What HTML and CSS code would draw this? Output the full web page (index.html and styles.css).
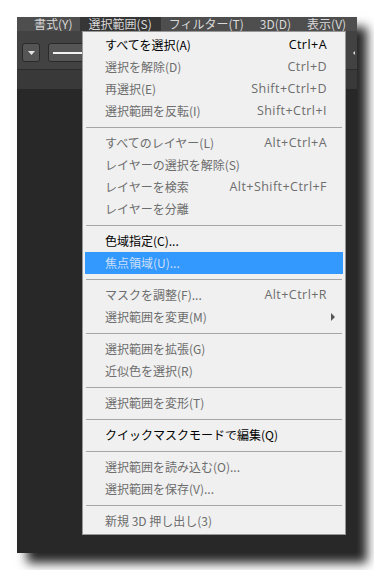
FILE: index.html
```html
<html lang="ja">
    <head>
        <meta charset="UTF-8">
        <meta name="viewport" content="width=device-width, initial-scale=1.0">
        <title>選択範囲メニュー</title>
        <link rel="stylesheet" href="styles.css">
    </head>
    <body>
        <div class="window">
            <div class="menubar">
                <span class="menu-title">書式(Y)</span>
                <span class="menu-title open">選択範囲(S)</span>
                <span class="menu-title">フィルター(T)</span>
                <span class="menu-title">3D(D)</span>
                <span class="menu-title">表示(V)</span>
            </div>
            <div class="toolbar">
                <div class="tool-btn">
                    <svg width="7" height="4" viewBox="0 0 7 4"><path d="M0 0h7L3.5 4z" fill="#e6e6e6"/></svg>
                </div>
                <div class="tool-field"><span class="stroke"></span></div>
                <span class="tool-end"></span>
            </div>
            <div class="optionsbar"></div>
            <div class="workspace"></div>

            <div class="dropdown">
                <div class="item"><span>すべてを選択(A)</span><span class="key">Ctrl+A</span></div>
                <div class="item off"><span>選択を解除(D)</span><span class="key">Ctrl+D</span></div>
                <div class="item off"><span>再選択(E)</span><span class="key">Shift+Ctrl+D</span></div>
                <div class="item off"><span>選択範囲を反転(I)</span><span class="key">Shift+Ctrl+I</span></div>
                <div class="sep"></div>
                <div class="item off"><span>すべてのレイヤー(L)</span><span class="key">Alt+Ctrl+A</span></div>
                <div class="item off"><span>レイヤーの選択を解除(S)</span><span></span></div>
                <div class="item off"><span>レイヤーを検索</span><span class="key">Alt+Shift+Ctrl+F</span></div>
                <div class="item off"><span>レイヤーを分離</span><span></span></div>
                <div class="sep"></div>
                <div class="item"><span>色域指定(C)...</span><span></span></div>
                <div class="item off active"><span>焦点領域(U)...</span><span></span></div>
                <div class="sep"></div>
                <div class="item off"><span>マスクを調整(F)...</span><span class="key">Alt+Ctrl+R</span></div>
                <div class="item off"><span>選択範囲を変更(M)</span><span></span><span class="sub-arrow"></span></div>
                <div class="sep"></div>
                <div class="item off"><span>選択範囲を拡張(G)</span><span></span></div>
                <div class="item off"><span>近似色を選択(R)</span><span></span></div>
                <div class="sep"></div>
                <div class="item off"><span>選択範囲を変形(T)</span><span></span></div>
                <div class="sep"></div>
                <div class="item"><span>クイックマスクモードで編集(Q)</span><span></span></div>
                <div class="sep"></div>
                <div class="item off"><span>選択範囲を読み込む(O)...</span><span></span></div>
                <div class="item off"><span>選択範囲を保存(V)...</span><span></span></div>
                <div class="sep"></div>
                <div class="item off"><span>新規 3D 押し出し(3)</span><span></span></div>
            </div>
        </div>
    </body>
</html>
```

FILE: styles.css
```css
body {
    margin: 0;
    padding: 17px;
    background-color: #ffffff;
    font-family: 'Noto Sans CJK JP', 'DejaVu Sans', sans-serif;
    font-size: 12px;
}
.window {
    position: relative;
    width: 340px;
    height: 536px;
    display: flex;
    flex-direction: column;
    background-color: #282828;
    box-shadow: 10px 10px 10px rgba(0, 0, 0, 0.85);
}
.menubar {
    height: 14px;
    display: flex;
    padding-left: 9px;
    background-color: #4e4e4e;
}
.menu-title {
    padding: 0 8px;
    line-height: 14px;
    color: #d9d9d9;
    white-space: nowrap;
}
.menu-title.open {
    background-color: #363636;
    padding-right: 9px;
}
.toolbar {
    height: 39px;
    display: flex;
    align-items: flex-start;
    padding: 12px 2px 0 5px;
    box-sizing: border-box;
    background-color: #424242;
    border-bottom: 1px solid #2c2c2c;
}
.tool-btn {
    width: 16px;
    height: 17px;
    display: flex;
    align-items: center;
    justify-content: center;
    background-color: #555555;
    border: 1px solid #2a2a2a;
    border-radius: 3px;
}
.tool-field {
    width: 70px;
    height: 17px;
    margin-left: 8px;
    display: flex;
    align-items: center;
    padding-left: 4px;
    background-color: #555555;
    border: 1px solid #2a2a2a;
    border-radius: 3px;
}
.stroke {
    width: 60px;
    height: 2px;
    background-color: #f2f2f2;
}
.tool-end {
    margin-left: auto;
    margin-top: 8px;
    width: 0;
    height: 0;
    border-top: 2px solid transparent;
    border-bottom: 2px solid transparent;
    border-right: 2px solid #dddddd;
}
.optionsbar {
    height: 19px;
    background-color: #393939;
}
.workspace {
    flex: 1;
    background-color: #282828;
}
.dropdown {
    position: absolute;
    left: 65px;
    top: 14px;
    width: 262px;
    padding: 1.5px 0 2px;
    background-color: #f0f0f0;
    border: 1px solid #979797;
}
.item {
    display: grid;
    grid-template-columns: 1fr auto 16px;
    align-items: center;
    height: 22px;
    margin: 0 2px;
    padding-left: 20px;
    color: #000000;
    white-space: nowrap;
}
.item .key {
    font-family: 'Open Sans', sans-serif;
    font-size: 12.5px;
    letter-spacing: 0.45px;
}
.item.off {
    color: #6d6d6d;
}
.item.active {
    background-color: #3399ff;
    color: #cddff6;
}
.sub-arrow {
    margin-left: 4px;
    width: 0;
    height: 0;
    border-top: 4px solid transparent;
    border-bottom: 4px solid transparent;
    border-left: 4px solid #555555;
}
.sep {
    height: 1px;
    margin: 5px 3px 4px;
    background-color: #a6a6a6;
}
```
